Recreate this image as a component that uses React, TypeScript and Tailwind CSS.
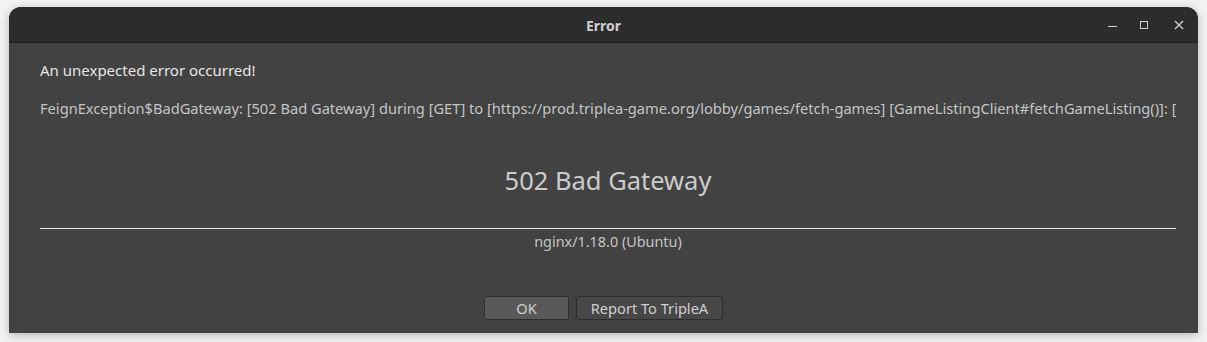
import React from "react";

export default function App() {
  const font = { fontFamily: '"Noto Sans", "Open Sans", sans-serif' };
  return (
    <div className="w-[1207px] h-[342px] bg-[#f2f2f2] pt-[7px] px-[9px] pb-[9px]" style={font}>
      <div className="h-[326px] flex flex-col rounded-t-[12px] overflow-hidden shadow-[0_2px_10px_rgba(0,0,0,0.25)] bg-[#424242]">
        <div className="h-[36px] bg-[#2c2c2c] border-b border-[#1e1e1e] flex items-center relative shrink-0">
          <div className="flex-1 text-center text-[14px] font-bold text-[#cfcfcf] pt-[1px]">Error</div>
          <div className="absolute right-0 top-0 h-full flex items-center">
            <div className="w-[32px] flex justify-center">
              <div className="w-[9px] h-[1px] bg-[#d0d0d0] mt-[4px]" />
            </div>
            <div className="w-[32px] flex justify-center">
              <div className="w-[8px] h-[8px] border border-[#d0d0d0]" />
            </div>
            <div className="w-[38px] flex justify-center">
              <svg width="10" height="10" viewBox="0 0 10 10">
                <path d="M1 1 L9 9 M9 1 L1 9" stroke="#d0d0d0" strokeWidth="1.3" />
              </svg>
            </div>
          </div>
        </div>
        <div className="flex-1 flex flex-col pl-[31px] pr-[22px] text-[14.6px]">
          <div className="mt-[17px] leading-[20px] text-[#e6e6e6] text-[15px]">An unexpected error occurred!</div>
          <div className="mt-[18px] leading-[20px] text-[#c4c4c4] text-[14.65px] whitespace-nowrap overflow-hidden">
            FeignException$BadGateway: [502 Bad Gateway] during [GET] to [https://prod.triplea-game.org/lobby/games/fetch-games] [GameListingClient#fetchGameListing()]: [
          </div>
          <div className="mt-[46px] leading-[32px] text-[25.5px] text-center text-[#cbcbcb]">502 Bad Gateway</div>
          <div className="mt-[32px] h-[1px] bg-[#e6e6e6]" />
          <div className="mt-[3px] leading-[20px] text-center text-[#c4c4c4] text-[14.4px]">nginx/1.18.0 (Ubuntu)</div>
          <div className="mt-[44px] pr-[9px] flex justify-center gap-[7px]">
            <button className="w-[85px] h-[24px] rounded-[3px] bg-[#595959] border border-[#2e2e2e] text-[#cfcfcf] text-[14.6px] leading-none">OK</button>
            <button className="w-[147px] h-[24px] rounded-[3px] bg-[#474747] border border-[#2e2e2e] text-[#cfcfcf] text-[14.6px] leading-none">Report To TripleA</button>
          </div>
        </div>
      </div>
    </div>
  );
}
